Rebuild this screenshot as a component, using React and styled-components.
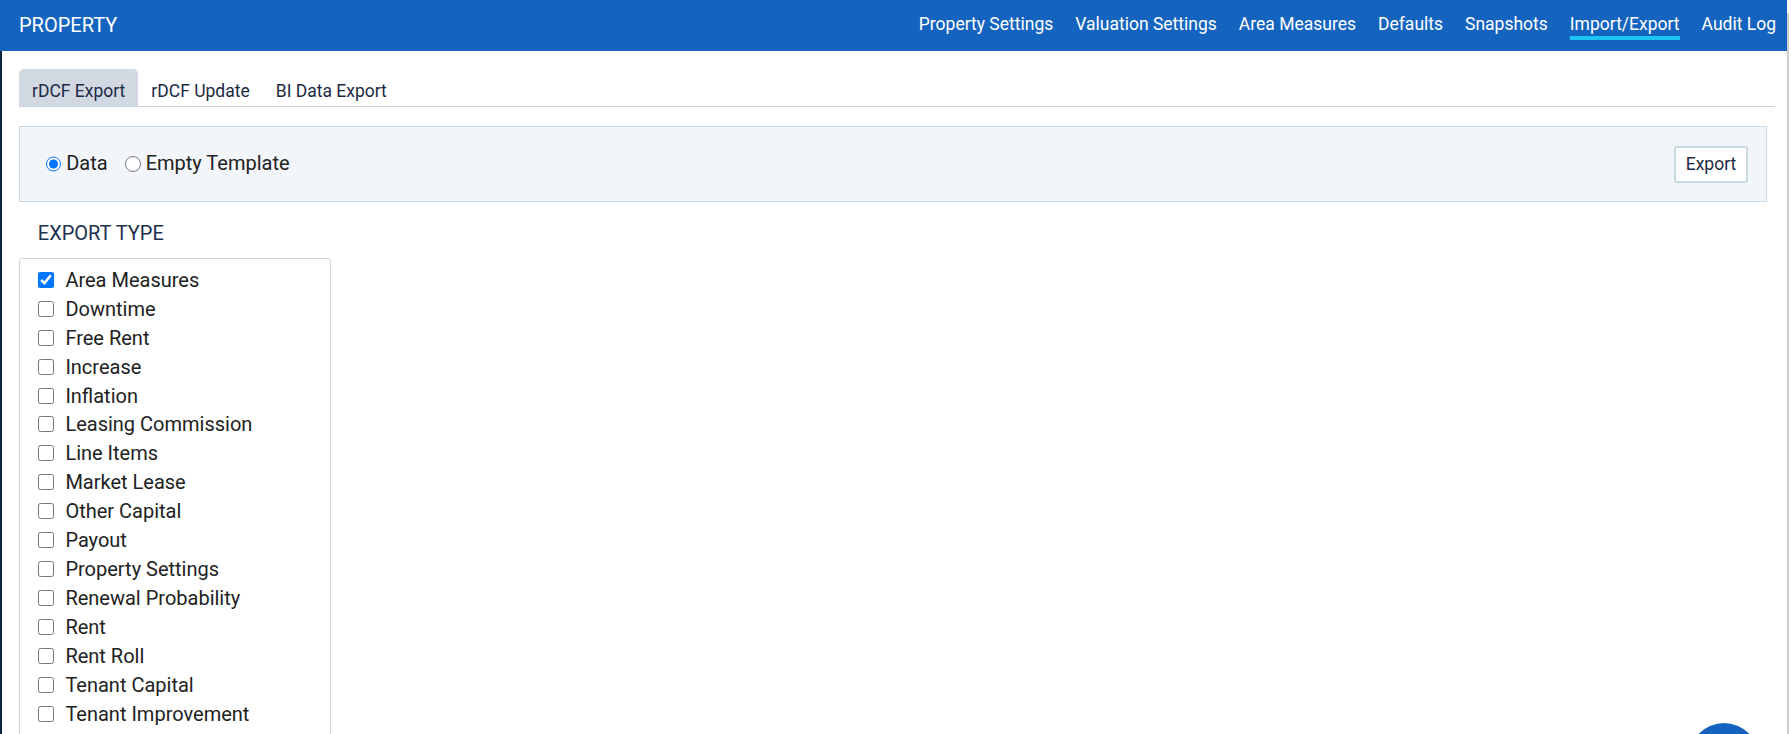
import React, { useState } from 'react'
import styled, { createGlobalStyle } from 'styled-components'

const GlobalStyle = createGlobalStyle`
  html, body {
    margin: 0;
    padding: 0;
    overflow: hidden;
    background: #fff;
    font-family: Roboto, "Liberation Sans", Arial, sans-serif;
  }
  * { box-sizing: border-box; }
`

const navLinks = [
  'Property Settings',
  'Valuation Settings',
  'Area Measures',
  'Defaults',
  'Snapshots',
  'Import/Export',
  'Audit Log',
]

const subTabs = ['rDCF Export', 'rDCF Update', 'BI Data Export']

const exportTypes = [
  'Area Measures',
  'Downtime',
  'Free Rent',
  'Increase',
  'Inflation',
  'Leasing Commission',
  'Line Items',
  'Market Lease',
  'Other Capital',
  'Payout',
  'Property Settings',
  'Renewal Probability',
  'Rent',
  'Rent Roll',
  'Tenant Capital',
  'Tenant Improvement',
]

const Page = styled.div`
  display: flex;
  height: 100vh;
`

const Frame = styled.div`
  flex: 1;
  min-width: 0;
  display: flex;
  flex-direction: column;
`

const ScrollEdge = styled.div`
  width: 4px;
  margin-top: 13px;
  border-left: 2px solid #cdcdcd;
`

const TopBar = styled.header`
  height: 51px;
  flex-shrink: 0;
  background: #1464bf;
  color: #fff;
  display: flex;
  align-items: stretch;
`

const Brand = styled.div`
  display: flex;
  align-items: center;
  padding: 0 0 2px 19px;
  font-size: 20px;
`

const Nav = styled.nav`
  margin-left: auto;
  display: flex;
  align-items: flex-start;
  gap: 22px;
  padding-right: 11px;
`

const NavItem = styled.a`
  padding-top: 14px;
  padding-bottom: 1.5px;
  font-size: 17.5px;
  line-height: 20.5px;
  color: #fff;
  cursor: pointer;
  border-bottom: 4.5px solid ${p => (p.$active ? '#1ec3f4' : 'transparent')};
`

const Content = styled.main`
  flex: 1;
  border-left: 2px solid #0e2242;
  padding: 18px 0 0 17px;
`

const TabBar = styled.div`
  display: flex;
  margin-right: 12px;
  border-bottom: 1px solid #c9d3dd;
`

const Tab = styled.button`
  border: 0;
  margin: 0;
  font-family: inherit;
  padding: 12px 13px 4.5px;
  font-size: 17.5px;
  line-height: 20.5px;
  color: #1b2a45;
  border-radius: 5px 5px 0 0;
  background: ${p => (p.$active ? '#d1d8e2' : 'transparent')};
  cursor: pointer;
`

const OptionsPanel = styled.section`
  height: 76px;
  margin: 18.5px 20px 0 0;
  display: flex;
  align-items: center;
  padding: 1px 18px 0 25.7px;
  background: #f2f5fa;
  border: 1px solid #c9d7e0;
`

const RadioLabel = styled.label`
  display: flex;
  align-items: center;
  gap: 5px;
  margin-right: 17.5px;
  font-size: 20px;
  line-height: 23.5px;
  color: #222;
  cursor: pointer;

  input {
    width: 15.5px;
    height: 15.5px;
    margin: 0;
  }
`

const ExportButton = styled.button`
  margin-left: auto;
  width: 74px;
  height: 37px;
  padding: 0;
  background: #fff;
  border: 2px solid #c7d9e1;
  border-radius: 3px;
  font-family: inherit;
  font-size: 17.5px;
  color: #1b2a45;
  cursor: pointer;
`

const SectionTitle = styled.h3`
  margin: 20px 0 0 18.8px;
  font-size: 20px;
  line-height: 23.4px;
  font-weight: 400;
  color: #1d3050;
`

const TypeList = styled.div`
  width: 312px;
  margin-top: 13.5px;
  padding: 6px 0 8px 17.7px;
  border: 1px solid #c9d8e0;
  border-radius: 3px;
  display: flex;
  flex-direction: column;
`

const CheckRow = styled.label`
  height: 28.93px;
  display: flex;
  align-items: center;
  gap: 11.7px;
  font-size: 20px;
  color: #222;
  cursor: pointer;

  input {
    width: 16px;
    height: 16px;
    margin: 0;
  }
`

const HelpFab = styled.button`
  position: fixed;
  left: 1689px;
  top: 723px;
  width: 70px;
  height: 70px;
  border: 0;
  border-radius: 50%;
  background: #1464bf;
`

export default function App() {
  const [mode, setMode] = useState('data')
  const [checked, setChecked] = useState({ 'Area Measures': true })

  return (
    <Page>
      <GlobalStyle />
      <Frame>
        <TopBar>
          <Brand>PROPERTY</Brand>
          <Nav>
            {navLinks.map(link => (
              <NavItem key={link} $active={link === 'Import/Export'}>{link}</NavItem>
            ))}
          </Nav>
        </TopBar>
        <Content>
          <TabBar>
            {subTabs.map(t => (
              <Tab key={t} $active={t === 'rDCF Export'}>{t}</Tab>
            ))}
          </TabBar>
          <OptionsPanel>
            <RadioLabel>
              <input type="radio" name="mode" checked={mode === 'data'} onChange={() => setMode('data')} />
              Data
            </RadioLabel>
            <RadioLabel>
              <input type="radio" name="mode" checked={mode === 'empty'} onChange={() => setMode('empty')} />
              Empty Template
            </RadioLabel>
            <ExportButton>Export</ExportButton>
          </OptionsPanel>
          <SectionTitle>EXPORT TYPE</SectionTitle>
          <TypeList>
            {exportTypes.map(type => (
              <CheckRow key={type}>
                <input
                  type="checkbox"
                  checked={!!checked[type]}
                  onChange={e => setChecked({ ...checked, [type]: e.target.checked })}
                />
                {type}
              </CheckRow>
            ))}
          </TypeList>
        </Content>
      </Frame>
      <ScrollEdge />
      <HelpFab aria-label="Help" />
    </Page>
  )
}
